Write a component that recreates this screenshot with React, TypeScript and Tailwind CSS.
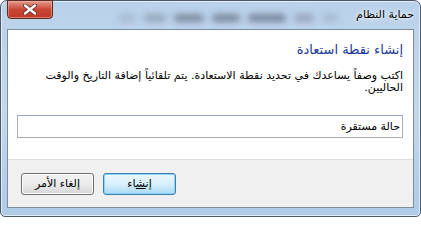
import { useState } from 'react';

const arabic = { fontFamily: '"DejaVu Sans", Tahoma, sans-serif' };

// blurred shapes seen through the glass title bar
const glassBlobs = [
  { w: 'w-[18px]', tone: 'bg-[#8d9bab]/40' },
  { w: 'w-[22px]', tone: 'bg-[#7f8d9d]/60' },
  { w: 'w-[30px]', tone: 'bg-[#6f7e8f]/80' },
  { w: 'w-[28px]', tone: 'bg-[#6a798a]/80' },
  { w: 'w-[38px]', tone: 'bg-[#66768a]/80' },
  { w: 'w-[20px]', tone: 'bg-[#7d8b9c]/60' },
  { w: 'w-[16px]', tone: 'bg-[#8a98a8]/40' },
];

export default function App() {
  const [desc, setDesc] = useState('حالة مستقرة');

  return (
    <div className="w-[421px] h-[217px] bg-white">
      <div className="w-full h-full flex flex-col rounded-t-[7px] rounded-b-[5px] border border-[#4a5968] bg-gradient-to-b from-[#b9d1ea] via-[#c3d8ee] to-[#aecbe8] px-[6px] pb-[8px] shadow-[inset_0_0_0_1px_rgba(255,255,255,0.6)]">
        {/* Title bar */}
        <div className="h-[28px] flex items-start justify-between">
          <button className="shrink-0 mt-[-1px] w-[46px] h-[19px] rounded-b-[4px] border border-[#5c2a25] bg-gradient-to-b from-[#e29a8c] via-[#c94535] to-[#c03a28] flex items-center justify-center shadow-[inset_0_0_0_1px_rgba(255,200,190,0.45)]">
            <svg width="14" height="11" viewBox="0 0 14 11">
              <path d="M2 1.5 L12 9.5 M12 1.5 L2 9.5" stroke="#5a2a24" strokeWidth="4" strokeLinecap="round" />
              <path d="M2 1.5 L12 9.5 M12 1.5 L2 9.5" stroke="#ffffff" strokeWidth="2.4" strokeLinecap="round" />
            </svg>
          </button>
          <div className="flex-1 min-w-0 overflow-hidden h-full flex items-center justify-center gap-[8px] pl-[60px] pr-[14px] pt-[6px]">
            {glassBlobs.map((b, i) => (
              <div key={i} className={`shrink-0 ${b.w} h-[8px] rounded-full blur-[3px] ${b.tone}`} />
            ))}
          </div>
          <div
            dir="rtl"
            className="shrink-0 whitespace-nowrap h-full flex items-center pt-[1px] text-[11px] text-black [text-shadow:0_0_6px_#ffffff,0_0_3px_#ffffff]"
            style={arabic}
          >
            حماية النظام
          </div>
        </div>

        {/* Client area */}
        <div dir="rtl" className="flex-1 flex flex-col border border-[#7d8b9b] bg-[#f0f0f0]" style={arabic}>
          <div className="h-[130px] bg-white border-b border-[#dfdfdf] pr-[10px] pl-[9px] pt-[10px]">
            <h1 className="text-[13px] leading-[20px] text-[#1c3a94]">إنشاء نقطة استعادة</h1>
            <p className="mt-[10px] text-[11px] leading-[12px] text-black pl-[8px]">
              اكتب وصفاً يساعدك في تحديد نقطة الاستعادة. يتم تلقائياً إضافة التاريخ والوقت الحاليين.
            </p>
            <input
              value={desc}
              onChange={(e) => setDesc(e.target.value)}
              className="mt-[21px] w-full h-[23px] border border-[#abadb3] border-t-[#8fa9c4] px-[2px] text-[11px] text-black outline-none"
              style={arabic}
            />
          </div>
          <div className="flex-1 flex items-start justify-end pl-[13px] pt-[13px] gap-[9px]">
            <button className="w-[73px] h-[22px] rounded-[3px] border border-[#3c7fb1] bg-gradient-to-b from-[#eaf6fd] via-[#d9f0fc] to-[#a7d9f5] shadow-[inset_0_0_0_1px_#8ed4f6] text-[11px] text-black">
              إن<span className="underline">ش</span>اء
            </button>
            <button className="w-[73px] h-[22px] rounded-[3px] border border-[#707070] bg-gradient-to-b from-[#f2f2f2] via-[#ebebeb] to-[#d5d5d5] shadow-[inset_0_0_0_1px_#fcfcfc] text-[11px] text-black">
              إلغاء الأمر
            </button>
          </div>
        </div>
      </div>
    </div>
  );
}
